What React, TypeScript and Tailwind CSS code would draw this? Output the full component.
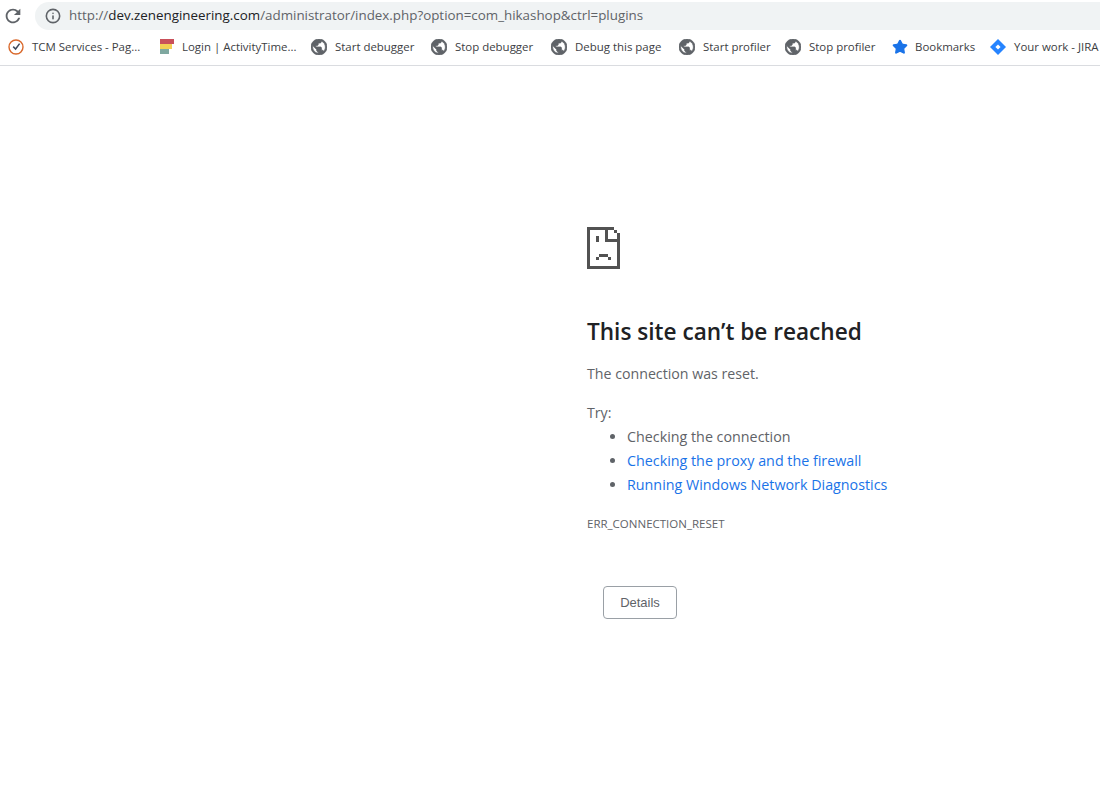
import { Info, Star } from "lucide-react";

const ui = "font-['Open_Sans','Noto_Sans',sans-serif]";

function Reload() {
  return (
    <svg viewBox="0 0 24 24" className="w-[22px] h-[22px]" fill="#5f6368">
      <path d="M17.65 6.35A7.958 7.958 0 0 0 12 4c-4.42 0-7.99 3.58-7.99 8s3.57 8 7.99 8c3.73 0 6.84-2.55 7.73-6h-2.08A5.99 5.99 0 0 1 12 18c-3.31 0-6-2.69-6-6s2.69-6 6-6c1.66 0 3.14.69 4.22 1.78L13 11h7V4l-2.35 2.35z" />
    </svg>
  );
}

function Globe() {
  return (
    <svg viewBox="2 2 20 20" className="w-4 h-4 shrink-0" fill="#5f6368" stroke="#5f6368" strokeWidth="1">
      <path d="M12 2C6.48 2 2 6.48 2 12s4.48 10 10 10 10-4.48 10-10S17.52 2 12 2zm-1 17.93c-3.95-.49-7-3.85-7-7.93 0-.62.08-1.21.21-1.79L9 15v1c0 1.1.9 2 2 2v1.93zm6.9-2.54c-.26-.81-1-1.39-1.9-1.39h-1v-3c0-.55-.45-1-1-1H8v-2h2c.55 0 1-.45 1-1V7h2c1.1 0 2-.9 2-2v-.41c2.93 1.19 5 4.06 5 7.41 0 2.08-.8 3.97-2.1 5.39z" />
    </svg>
  );
}

function Clock() {
  return (
    <svg viewBox="0 0 16 16" className="w-4 h-4 shrink-0" fill="none">
      <circle cx="8" cy="8" r="7" stroke="#d9682b" strokeWidth="1.4" />
      <path d="M5.2 7.6 L7.6 10 L11.6 4.6" stroke="#3d4a5c" strokeWidth="1.5" />
    </svg>
  );
}

function Bars() {
  return (
    <svg viewBox="0 0 14 15" className="w-[14px] h-[15px] shrink-0">
      <rect x="0" y="0" width="14" height="5" fill="#c9505a" />
      <rect x="0" y="5" width="12" height="5" fill="#f3cf55" />
      <rect x="0" y="10" width="9" height="5" fill="#7fa8a0" />
    </svg>
  );
}

function Diamond() {
  return (
    <svg viewBox="0 0 16 16" className="w-4 h-4 shrink-0">
      <path d="M8 0 L16 8 L8 16 L0 8 Z" fill="#2684ff" />
      <path d="M8 5.4 L10.6 8 L8 10.6 L5.4 8 Z" fill="#fff" />
    </svg>
  );
}

// Chrome's sad tab page, drawn pixel by pixel
function SadTab() {
  return (
    <svg viewBox="0 0 33 42" className="w-[33px] h-[42px] block" fill="#525252" shapeRendering="crispEdges">
      <rect x="0" y="0" width="3" height="42" />
      <rect x="0" y="0" width="27" height="3" />
      <rect x="0" y="39" width="33" height="3" />
      <rect x="30" y="6" width="3" height="36" />
      <rect x="18" y="0" width="3" height="14" />
      <rect x="18" y="12" width="15" height="3" />
      <rect x="27" y="3" width="3" height="3" />
      <rect x="9" y="9" width="3" height="6" />
      <rect x="9" y="30" width="3" height="3" />
      <rect x="12" y="27" width="9" height="3" />
      <rect x="21" y="30" width="3" height="3" />
    </svg>
  );
}

const bookmarks = [
  { label: "TCM Services - Pag...", icon: <Clock />, box: "w-[151px] pl-2", gap: "gap-2" },
  { label: "Login | ActivityTime...", icon: <Bars />, box: "w-[160px] pl-[9px]", gap: "gap-2" },
  { label: "Start debugger", icon: <Globe />, box: "w-[120px] pl-0", gap: "gap-2" },
  { label: "Stop debugger", icon: <Globe />, box: "w-[120px] pl-0", gap: "gap-2" },
  { label: "Debug this page", icon: <Globe />, box: "w-[128px] pl-0", gap: "gap-2" },
  { label: "Start profiler", icon: <Globe />, box: "w-[106px] pl-0", gap: "gap-2" },
  { label: "Stop profiler", icon: <Globe />, box: "w-[107px] pl-0", gap: "gap-2" },
  { label: "Bookmarks", icon: <Star className="w-4 h-4 shrink-0 text-[#1a73e8] fill-[#1a73e8]" />, box: "w-[98px] pl-0", gap: "gap-[7px]" },
  { label: "Your work - JIRA", icon: <Diamond />, box: "w-[130px] pl-0", gap: "gap-2" },
];

export default function App() {
  return (
    <div className={`min-h-[807px] bg-white overflow-hidden ${ui}`}>
      <div className="h-[66px] border-b border-[#dadce0] flex flex-col">
        <div className="h-[31px] flex items-center">
          <div className="w-[35px] pl-[2px]">
            <Reload />
          </div>
          <div className="h-[28px] flex-1 bg-[#f0f3f4] rounded-l-[14px] flex items-center pl-[10px] gap-2 text-[13.36px] text-[#5f6368] whitespace-nowrap">
            <Info className="w-4 h-4 text-[#5f6368]" strokeWidth={2.4} />
            <span>
              http://<span className="text-[#202124]">dev.zenengineering.com</span>/administrator/index.php?option=com_hikashop&amp;ctrl=plugins
            </span>
          </div>
        </div>
        <div className="h-[34px] pb-[2px] flex items-center text-[11.45px] text-[#3c4043] whitespace-nowrap">
          {bookmarks.map((b) => (
            <div key={b.label} className={`flex items-center shrink-0 ${b.box} ${b.gap}`}>
              {b.icon}
              <span>{b.label}</span>
            </div>
          ))}
        </div>
      </div>

      <main className="pl-[587px] pt-[161px]">
        <SadTab />
        <h1 className="mt-[47px] text-[22.6px] leading-[32px] font-semibold text-[#202124]">This site can’t be reached</h1>
        <p className="mt-[14px] text-[14.2px] leading-[24px] text-[#5f6368]">The connection was reset.</p>
        <p className="mt-[15px] text-[14.2px] leading-[24px] text-[#5f6368]">Try:</p>
        <ul className="list-disc pl-[40px] text-[14.3px] leading-[24px] text-[#5f6368]">
          <li>Checking the connection</li>
          <li><a className="text-[#1a73e8]">Checking the proxy and the firewall</a></li>
          <li><a className="text-[#1a73e8]">Running Windows Network Diagnostics</a></li>
        </ul>
        <p className="mt-[19px] text-[11.5px] leading-[16px] text-[#5f6368]">ERR_CONNECTION_RESET</p>
        <button className="block mt-[54px] ml-4 w-[74px] h-[33px] border border-[#9aa0a6] rounded-[4px] bg-white text-[13px] text-[#5f6368] font-['Liberation_Sans',Arial,sans-serif]">
          Details
        </button>
      </main>
    </div>
  );
}
